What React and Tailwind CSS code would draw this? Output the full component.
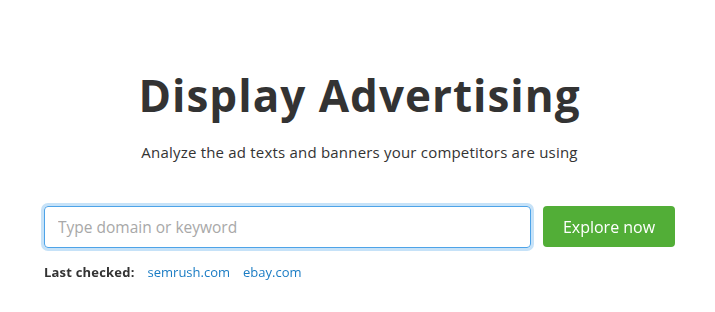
export default function App() {
  return (
    <div className="min-h-screen bg-white font-['Open_Sans',sans-serif] text-[#333]">
      <div className="pl-[44px] pr-[40px] pt-[65px]">
        <h1 className="text-center text-[44px] font-bold leading-[60px] tracking-[1px] text-[#333]">
          Display Advertising
        </h1>
        <p className="mt-[17px] text-center text-[15px] leading-[20px] tracking-[0.2px] text-[#333]">
          Analyze the ad texts and banners your competitors are using
        </p>
        <div className="mt-[44px] flex gap-[12px]">
          <input
            type="text"
            autoFocus
            placeholder="Type domain or keyword"
            className="h-[42px] flex-1 rounded-[4px] border border-[#4da3e8] px-[13px] text-[15.5px] text-[#333] caret-[#333] outline-none ring-[3px] ring-[#c6e2f8] placeholder:text-[#a8a8a8]"
          />
          <button className="h-[41px] w-[132px] rounded-[4px] bg-[#52ae37] text-[16px] text-white">
            Explore now
          </button>
        </div>
        <div className="mt-[15px] flex items-center text-[13px]">
          <span className="font-bold tracking-[0.2px] text-[#333]">Last checked:</span>
          <a className="ml-[13px] text-[#1a7cc4]">semrush.com</a>
          <a className="ml-[13px] text-[#1a7cc4]">ebay.com</a>
        </div>
      </div>
    </div>
  );
}
